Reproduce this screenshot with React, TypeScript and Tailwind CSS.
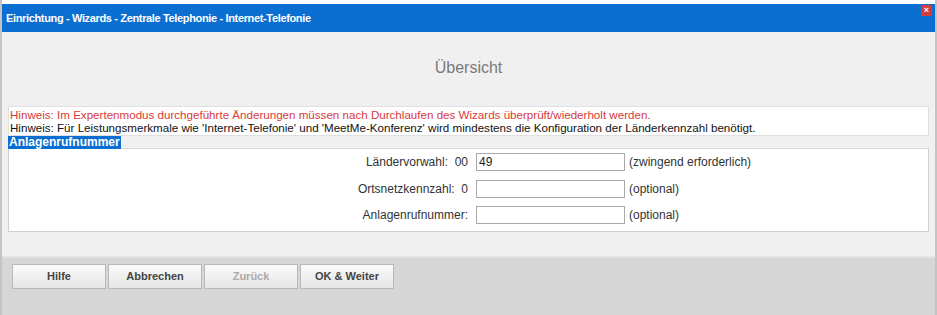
import React from "react";

const Row = ({ label, value, note }: { label: string; value?: string; note: string }) => (
  <div className="flex items-center h-[26.5px]">
    <div className="w-[467px] text-right pr-[8px] text-[12px] text-[#333] whitespace-pre">{label}</div>
    <input
      defaultValue={value}
      className="w-[149px] h-[18px] border border-[#a9a9a9] bg-white px-[2px] text-[12px] text-[#222] outline-none"
    />
    <div className="pl-[4px] text-[12px] text-[#333]">{note}</div>
  </div>
);

const Btn = ({ label, disabled }: { label: string; disabled?: boolean }) => (
  <button
    className={
      "w-[94px] h-[25px] border border-[#b9b9b9] bg-gradient-to-b from-[#fafafa] to-[#e6e6e6] text-[11px] font-bold " +
      (disabled ? "text-[#aaa]" : "text-[#444]")
    }
  >
    {label}
  </button>
);

export default function App() {
  return (
    <div className="w-[937px] h-[315px] bg-white font-['Liberation_Sans',Arial,sans-serif] overflow-hidden">
      <div className="h-full pt-[4px] border-l-2 border-r-2 border-[#c4c4c4] flex flex-col">
        {/* Title bar */}
        <div className="h-[28px] bg-[#0b6fd1] flex items-center justify-between pl-[4px] pr-[3px]">
          <span className="text-white font-bold text-[11px] tracking-[-0.35px]">
            Einrichtung - Wizards - Zentrale Telephonie - Internet-Telefonie
          </span>
          <span className="w-[11px] h-[11px] bg-[#d63b3b] self-start mt-[1px] flex items-center justify-center text-white text-[9px] font-bold leading-none">
            ×
          </span>
        </div>

        {/* Body */}
        <div className="flex-1 bg-[#f0f0f0] flex flex-col">
          <div className="h-[72px] flex items-center justify-center text-[16px] text-[#7a7a7a]">Übersicht</div>

          <div className="mx-[6px] mt-[2px] bg-white border border-[#e0e0e0] px-[1px] py-[1px] text-[11.6px] leading-[13px]">
            <div className="text-[#d63a3a]">
              Hinweis: Im Expertenmodus durchgeführte Änderungen müssen nach Durchlaufen des Wizards überprüft/wiederholt werden.
            </div>
            <div className="text-[#111]">
              Hinweis: Für Leistungsmerkmale wie 'Internet-Telefonie' und 'MeetMe-Konferenz' wird mindestens die Konfiguration der Länderkennzahl benötigt.
            </div>
          </div>

          <div className="mx-[6px]">
            <div className="flex items-end">
              <span className="bg-[#0b6fd1] text-white font-bold text-[12px] leading-[13px] px-[1px]">Anlagenrufnummer</span>
              <div className="flex-1 border-b border-[#d8d8d8]" />
            </div>
            <div className="bg-white border border-t-0 border-[#d0d0d0] pb-[2px]">
              <Row label="Ländervorwahl:  00" value="49" note="(zwingend erforderlich)" />
              <Row label="Ortsnetzkennzahl:  0" note="(optional)" />
              <Row label="Anlagenrufnummer:" note="(optional)" />
            </div>
          </div>
          <div className="flex-1" />
        </div>

        {/* Footer */}
        <div className="h-[59px] bg-[#d6d6d6] border-t-2 border-[#e4e4e4] flex items-start gap-[2px] pl-[10px] pt-[6px]">
          <Btn label="Hilfe" />
          <Btn label="Abbrechen" />
          <Btn label="Zurück" disabled />
          <Btn label="OK & Weiter" />
        </div>
      </div>
    </div>
  );
}
